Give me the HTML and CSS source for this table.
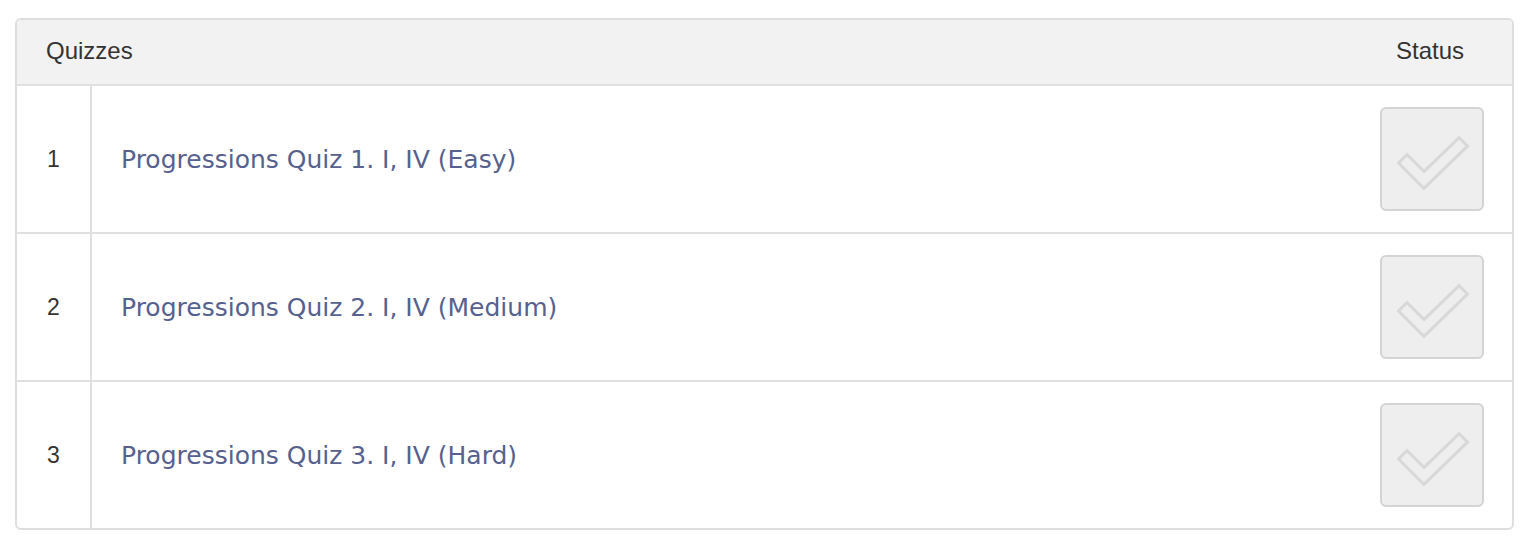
FILE: index.html
```html
<!DOCTYPE html>
<html>
<head>
<meta charset="utf-8">
<link rel="stylesheet" href="styles.css">
</head>
<body>
<div class="panel">
  <div class="head">
    <div class="head-title">Quizzes</div>
    <div class="head-status">Status</div>
  </div>
  <div class="row">
    <div class="num">1</div>
    <div class="name"><a href="#">Progressions Quiz 1. I, IV (Easy)</a></div>
    <div class="status"><span class="check"><svg viewBox="0 0 104 104" width="104" height="104"><path d="M27 56 L44 73 L79 39" class="c-out"/><path d="M27 56 L44 73 L79 39" class="c-in"/></svg></span></div>
  </div>
  <div class="row">
    <div class="num">2</div>
    <div class="name"><a href="#">Progressions Quiz 2. I, IV (Medium)</a></div>
    <div class="status"><span class="check"><svg viewBox="0 0 104 104" width="104" height="104"><path d="M27 56 L44 73 L79 39" class="c-out"/><path d="M27 56 L44 73 L79 39" class="c-in"/></svg></span></div>
  </div>
  <div class="row last">
    <div class="num">3</div>
    <div class="name"><a href="#">Progressions Quiz 3. I, IV (Hard)</a></div>
    <div class="status"><span class="check"><svg viewBox="0 0 104 104" width="104" height="104"><path d="M27 56 L44 73 L79 39" class="c-out"/><path d="M27 56 L44 73 L79 39" class="c-in"/></svg></span></div>
  </div>
</div>
</body>
</html>
```
FILE: styles.css
```css
html, body { margin: 0; padding: 0; background: #fff; }
body { padding: 18px 16px 0 15px; font-family: "Liberation Sans", Arial, sans-serif; color: #333; }
.panel {
  border: 2px solid #dedede;
  border-radius: 6px;
  overflow: hidden;
  box-sizing: border-box;
  width: 1499px;
  height: 512px;
  display: flex;
  flex-direction: column;
}
.head {
  height: 64px;
  box-sizing: border-box;
  padding-bottom: 3px;
  background: #f2f2f2;
  display: flex;
  align-items: center;
  font-size: 24px;
  color: #333;
  flex: none;
}
.head-title { flex: 1; padding-left: 29px; }
.head-status { width: 160px; text-align: center; padding-right: 4px; box-sizing: border-box; }
.panel > .row:nth-child(2) { border-top: 2px solid #e0e0e0; height: 150px; }
.row {
  height: 148px;
  display: flex;
  border-bottom: 2px solid #e0e0e0;
  box-sizing: border-box;
  flex: none;
}
.row.last { border-bottom: none; flex: 1; }
.num {
  width: 73px;
  border-right: 2px solid #e0e0e0;
  display: flex;
  align-items: center;
  justify-content: center;
  font-size: 23px;
  color: #333;
}
.name {
  flex: 1;
  display: flex;
  align-items: center;
  padding-left: 29px;
}
.name a {
  font-family: "DejaVu Sans", Verdana, sans-serif;
  font-size: 25px;
  color: #56618f;
  text-decoration: none;
}
.status {
  width: 160px;
  display: flex;
  align-items: center;
  justify-content: center;
}
.check {
  width: 104px;
  height: 104px;
  box-sizing: border-box;
  border: 2px solid #d4d4d4;
  border-radius: 6px;
  background: #eeeeee;
  display: block;
  overflow: hidden;
}
.check svg { display: block; margin: -2px; }
.c-out { fill: none; stroke: #d8d8d8; stroke-width: 15; stroke-linecap: square; stroke-linejoin: miter; }
.c-in { fill: none; stroke: #eeeeee; stroke-width: 9; stroke-linecap: square; stroke-linejoin: miter; }
```
